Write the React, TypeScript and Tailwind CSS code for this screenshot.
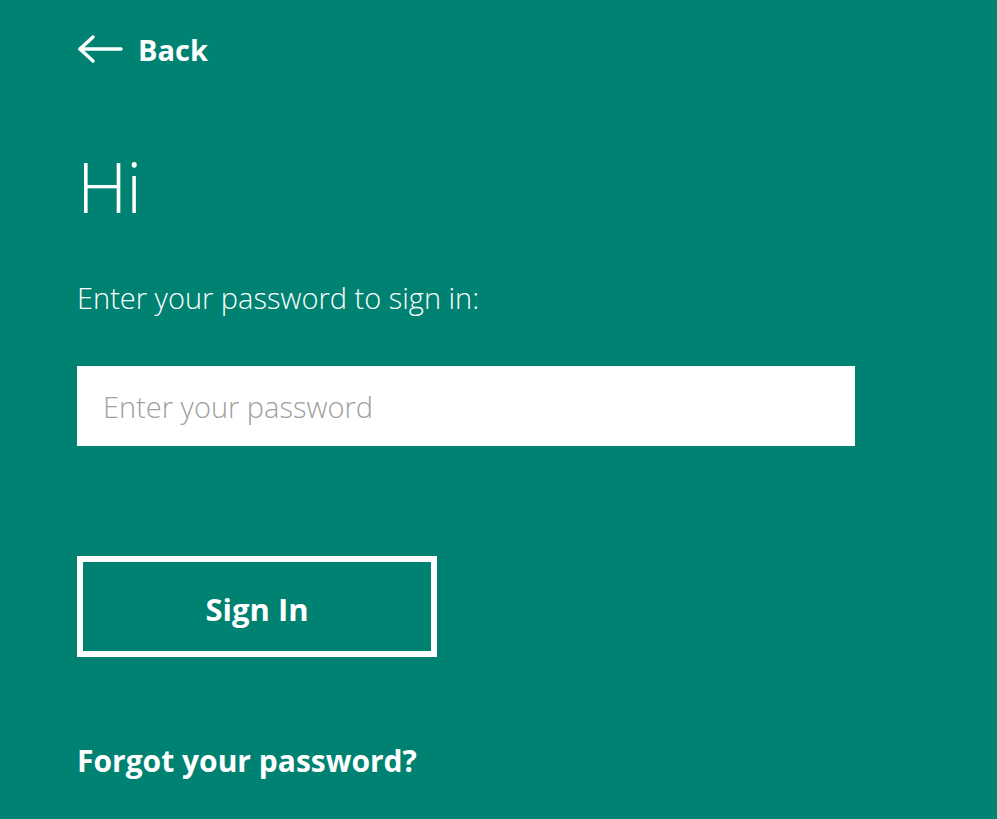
export default function App() {
  return (
    <div
      className="w-[997px] h-[819px] overflow-hidden bg-[#008272] text-white pl-[77px]"
      style={{ fontFamily: '"Open Sans", "Noto Sans", sans-serif' }}
    >
      {/* Back link */}
      <div className="flex items-center h-[50px] mt-[24px]">
        <svg width="46" height="30" viewBox="0 0 46 30" fill="none" stroke="white" strokeWidth="3.5" strokeLinecap="round" strokeLinejoin="round">
          <path d="M3 15 H44" />
          <path d="M16 3 L3 15 L16 27" />
        </svg>
        <span className="ml-[15px] text-[29px] font-bold leading-none">Back</span>
      </div>

      <h1 className="mt-[77px] text-[70px] font-light leading-none tracking-[-1px]">Hi</h1>

      <p className="mt-[62px] text-[29px] font-light leading-none">Enter your password to sign in:</p>

      <input
        type="password"
        placeholder="Enter your password"
        className="mt-[54px] block w-[778px] h-[80px] bg-white px-[26px] text-[29px] font-light text-gray-800 placeholder:text-[#a0a0a0] outline-none"
      />

      <button className="mt-[110px] flex items-center justify-center w-[360px] h-[101px] pt-[5px] border-[6px] border-white text-[31px] font-bold">
        Sign In
      </button>

      <a href="#" className="block mt-[89px] text-[30px] font-bold leading-none">
        Forgot your password?
      </a>
    </div>
  );
}
